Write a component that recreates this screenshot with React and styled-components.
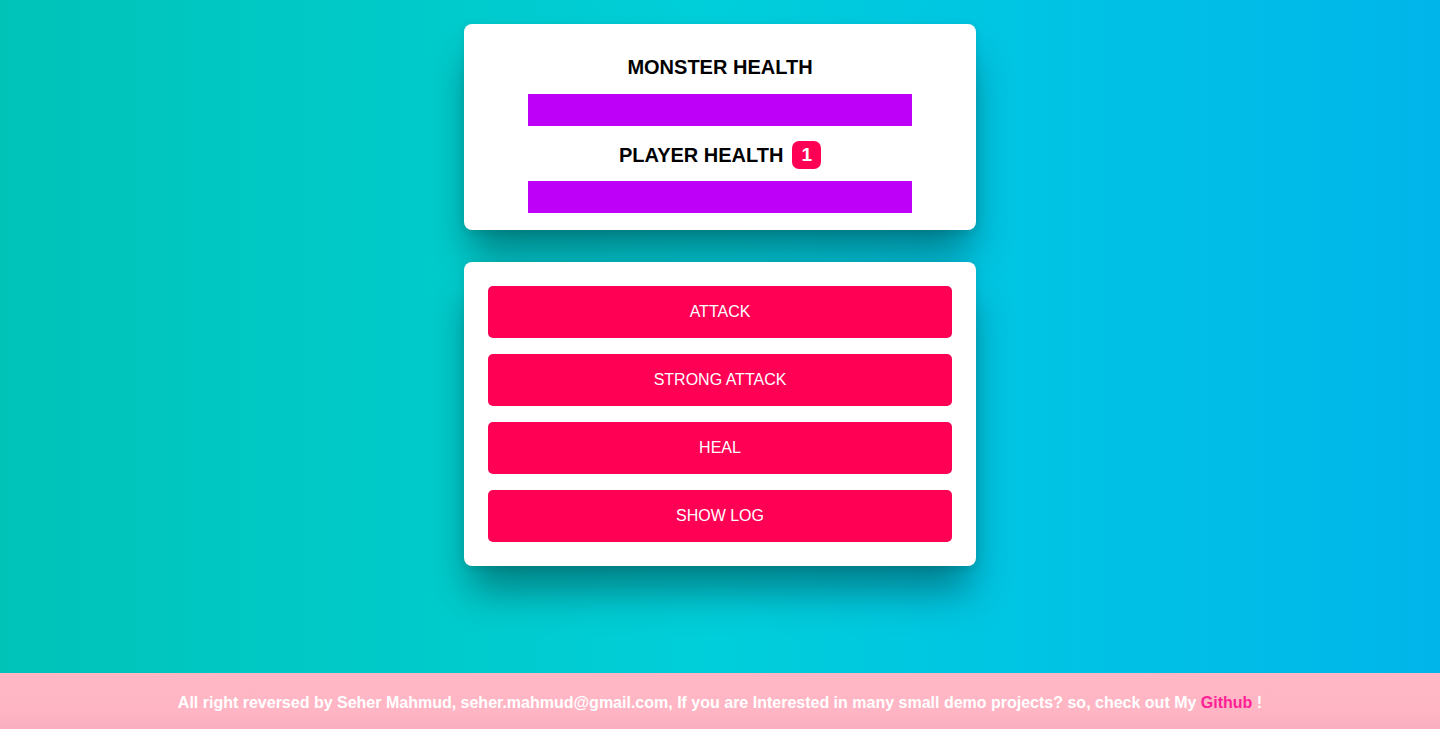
import React from 'react'
import styled, { createGlobalStyle } from 'styled-components'

const GlobalStyle = createGlobalStyle`
    * {
        box-sizing: border-box;
    }
    html, body {
        margin: 0;
        padding: 0;
        height: 100%;
    }
    body {
        font-family: "Liberation Sans", Arial, Helvetica, sans-serif;
    }
`

const App = () => {
    const actions = ['ATTACK', 'STRONG ATTACK', 'HEAL', 'SHOW LOG']

    return (
        <Page>
            <GlobalStyle />
            <Main>
                <Card $padding="24px 0 17px">
                    <Title>MONSTER HEALTH</Title>
                    <HealthBar $top={8} value={100} max={100} />
                    <Title $top={10}>
                        PLAYER HEALTH <Badge>1</Badge>
                    </Title>
                    <HealthBar $top={7} value={100} max={100} />
                </Card>
                <Card $padding="24px" $top={32}>
                    <Controls>
                        {actions.map((label) => (
                            <ActionButton key={label}>{label}</ActionButton>
                        ))}
                    </Controls>
                </Card>
            </Main>
            <Footer>
                All right reversed by Seher Mahmud, seher.mahmud@gmail.com, If you are Interested in many small demo projects? so, check out My <a href="#">Github</a> !
            </Footer>
        </Page>
    )
}

export default App

const Page = styled.div`
    min-height: 100vh;
    display: flex;
    flex-direction: column;
    background: linear-gradient(to right, #00c3b8 0%, #00cbcb 30%, #00ceda 50%, #00c4e4 72%, #00b5ea 100%);
`

const Main = styled.main`
    flex: 1;
    display: flex;
    flex-direction: column;
    align-items: center;
    padding-top: 24px;
`

const Card = styled.section`
    width: 512px;
    margin-top: ${(p) => p.$top || 0}px;
    padding: ${(p) => p.$padding};
    background: #fff;
    border-radius: 8px;
    box-shadow: 0 2px 8px rgba(0, 0, 0, 0.1), 0 30px 40px -6px rgba(0, 0, 0, 0.38);
    display: flex;
    flex-direction: column;
    align-items: center;
`

const Title = styled.h2`
    margin: ${(p) => p.$top || 0}px 0 0;
    height: 38px;
    display: flex;
    align-items: center;
    gap: 9px;
    font-size: 20px;
    font-weight: 700;
    color: #000;
`

const Badge = styled.span`
    display: inline-flex;
    align-items: center;
    justify-content: center;
    height: 28px;
    padding: 0 9px;
    border-radius: 7px;
    background: #ff0055;
    color: #fff;
    font-size: 19px;
    font-weight: 700;
`

const HealthBar = styled.progress`
    appearance: none;
    -webkit-appearance: none;
    display: block;
    width: 75%;
    height: 32px;
    margin-top: ${(p) => p.$top}px;
    border: none;
    background: #be00f8;
    &::-webkit-progress-bar {
        background: #fff;
    }
    &::-webkit-progress-value {
        background: #be00f8;
    }
    &::-moz-progress-bar {
        background: #be00f8;
    }
`

const Controls = styled.div`
    width: 100%;
    display: flex;
    flex-direction: column;
    gap: 16px;
`

const ActionButton = styled.button`
    height: 52px;
    width: 100%;
    border: none;
    border-radius: 5px;
    background: #ff0055;
    color: #fff;
    font-family: "Liberation Sans", Arial, sans-serif;
    font-size: 16px;
    cursor: pointer;
    &:hover {
        background: #e6004c;
    }
`

const Footer = styled.footer`
    height: 56px;
    padding-top: 3px;
    display: flex;
    align-items: center;
    justify-content: center;
    background: linear-gradient(to bottom, #ffb7c5 0%, #ffb5c4 70%, #f9adc0 100%);
    color: #fff;
    font-size: 16px;
    font-weight: 700;
    white-space: pre;
    a {
        color: #ff1f96;
        text-decoration: none;
    }
`
